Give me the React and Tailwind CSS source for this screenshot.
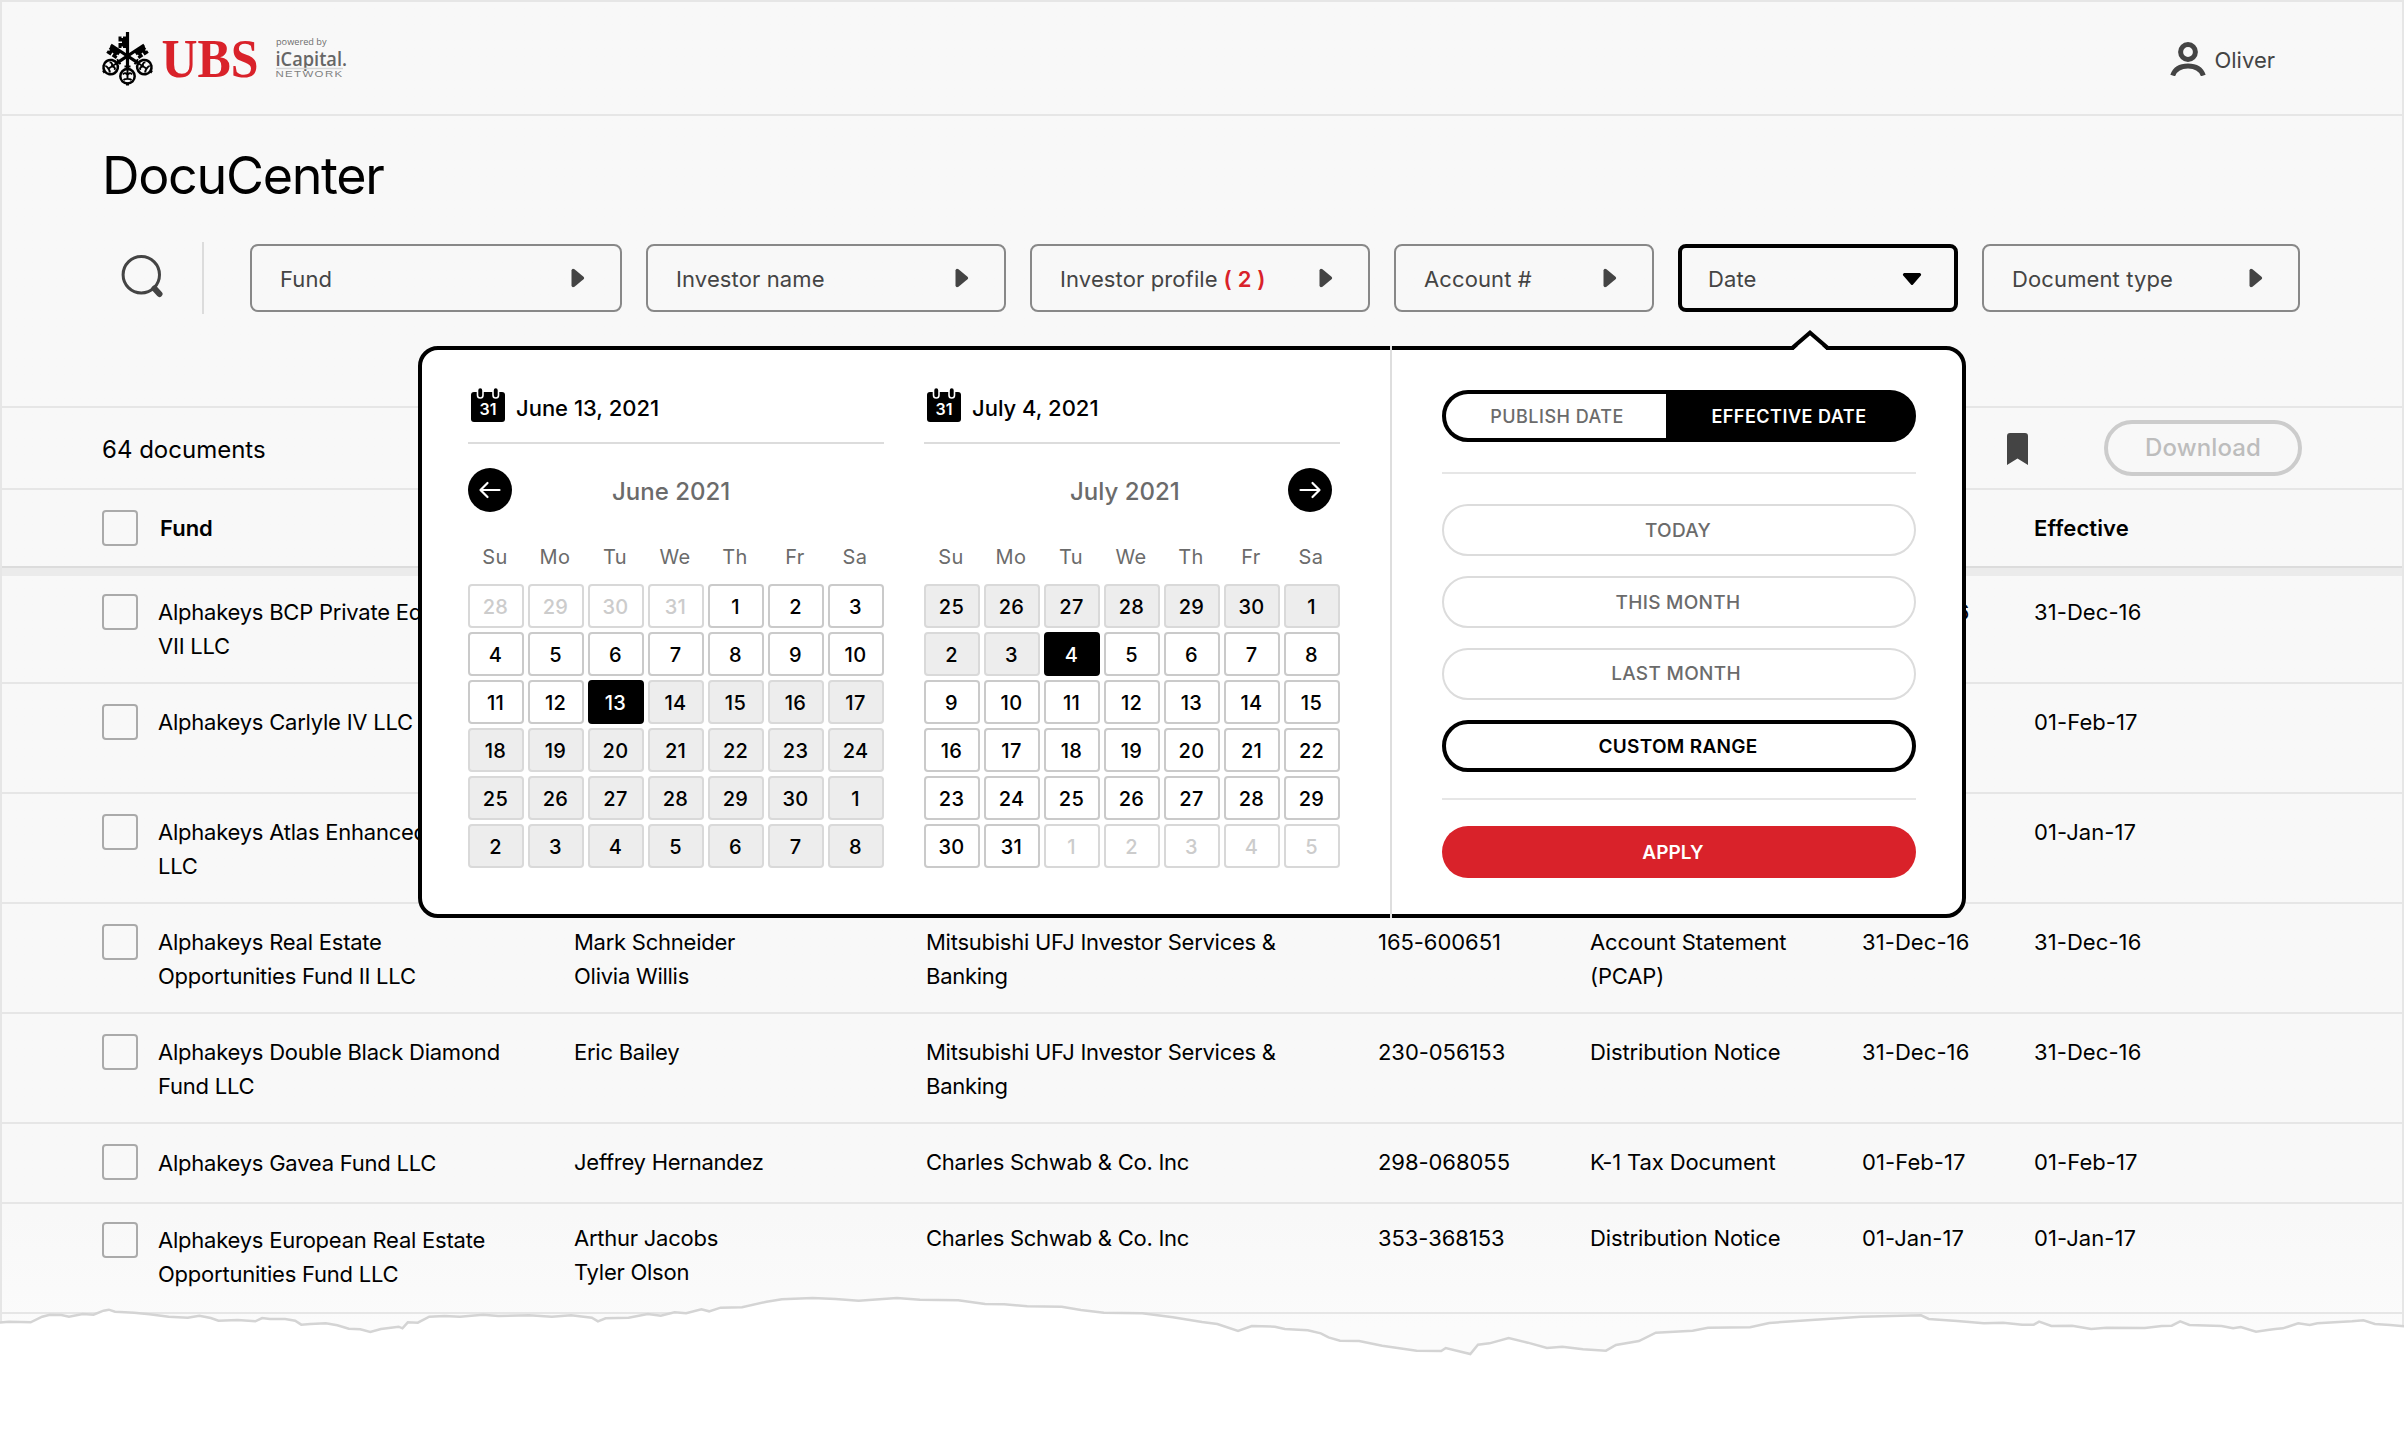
const filters = [
  { label: 'Fund', width: 'w-[372px]' },
  { label: 'Investor name', width: 'w-[360px]' },
  { label: 'Investor profile', count: 2, width: 'w-[340px]' },
  { label: 'Account #', width: 'w-[260px]' },
  { label: 'Date', width: 'w-[280px]', open: true },
  { label: 'Document type', width: 'w-[318px]' },
];

const documents = [
  {
    fund: ['Alphakeys BCP Private Equity', 'VII LLC'],
    published: '31-Dec-16',
    effective: '31-Dec-16',
    size: 'h-[108px] pt-[18px]',
  },
  { fund: ['Alphakeys Carlyle IV LLC'], effective: '01-Feb-17' },
  { fund: ['Alphakeys Atlas Enhanced', 'LLC'], effective: '01-Jan-17' },
  {
    fund: ['Alphakeys Real Estate', 'Opportunities Fund II LLC'],
    investor: ['Mark Schneider', 'Olivia Willis'],
    profile: ['Mitsubishi UFJ Investor Services &', 'Banking'],
    account: '165-600651',
    type: ['Account Statement', '(PCAP)'],
    published: '31-Dec-16',
    effective: '31-Dec-16',
  },
  {
    fund: ['Alphakeys Double Black Diamond', 'Fund LLC'],
    investor: ['Eric Bailey'],
    profile: ['Mitsubishi UFJ Investor Services &', 'Banking'],
    account: '230-056153',
    type: ['Distribution Notice'],
    published: '31-Dec-16',
    effective: '31-Dec-16',
  },
  {
    fund: ['Alphakeys Gavea Fund LLC'],
    investor: ['Jeffrey Hernandez'],
    profile: ['Charles Schwab & Co. Inc'],
    account: '298-068055',
    type: ['K-1 Tax Document'],
    published: '01-Feb-17',
    effective: '01-Feb-17',
    size: 'h-20 pt-5',
    fundShift: 'mt-0.5',
  },
  {
    fund: ['Alphakeys European Real Estate', 'Opportunities Fund LLC'],
    investor: ['Arthur Jacobs', 'Tyler Olson'],
    profile: ['Charles Schwab & Co. Inc'],
    account: '353-368153',
    type: ['Distribution Notice'],
    published: '01-Jan-17',
    effective: '01-Jan-17',
    size: 'h-[110px] pt-[18px]',
    shift: '-mt-0.5',
  },
];

const weekdays = ['Su', 'Mo', 'Tu', 'We', 'Th', 'Fr', 'Sa'];

const range = (from, to, state) =>
  Array.from({ length: to - from + 1 }, (_, i) => ({ day: from + i, state }));

const juneDays = [
  ...range(28, 31, 'muted'),
  ...range(1, 12, 'normal'),
  ...range(13, 13, 'selected'),
  ...range(14, 30, 'inRange'),
  ...range(1, 8, 'inRange'),
];

const julyDays = [
  ...range(25, 30, 'inRange'),
  ...range(1, 3, 'inRange'),
  ...range(4, 4, 'selected'),
  ...range(5, 31, 'normal'),
  ...range(1, 5, 'muted'),
];

const dayStyles = {
  normal: 'border-[#cacaca] bg-white text-black',
  muted: 'border-[#d8d8d8] bg-white text-[#cccccc]',
  inRange: 'border-[#d9d9d9] bg-[#ededed] text-black',
  selected: 'border-black bg-black text-white',
};

const rowGrid = 'grid grid-cols-[56px_416px_352px_452px_212px_272px_172px_1fr] pl-[100px]';

function Key({ transform, top = 4 }) {
  return (
    <g transform={transform}>
      <path d={`M25.5 ${top}V37`} stroke="#000" strokeWidth="3.200" />
      <path
        d="M25 4.500h-4v1.500h-1.500v-1.500h-3v5h3.500v1.500h-3.500v5h3v-1.500h1.500v1.500H25z"
        fill="#000"
      />
      <path d="M22.500 34.500h6" stroke="#000" strokeWidth="2" />
      <circle cx="25.500" cy="44.200" r="7.200" fill="#f8f8f8" stroke="#000" strokeWidth="2.500" />
      <path
        d="M25.5 37v5M21 42.500c1-2.200 4-1.500 4.500.8.500-2.300 3.500-3 4.500-.8M25.500 43v4M21.500 48c1.500-1.500 6.500-1.500 8 0"
        fill="none"
        stroke="#000"
        strokeWidth="1.900"
      />
      <path d="M25.500 50.500v3" stroke="#000" strokeWidth="3" />
    </g>
  );
}

function KeysLogo() {
  return (
    <svg viewBox="0 0 52 56" className="h-14 w-[52px] overflow-visible">
      <Key transform="rotate(-56.500 25.500 24)" />
      <Key transform="translate(51 0) scale(-1 1) rotate(-56.500 25.500 24)" />
      <Key top={0} />
    </svg>
  );
}

function Header() {
  return (
    <header className="flex h-[114px] items-center justify-between border-b-2 border-[#e6e6e6] pl-[100px] pr-[127px] pt-[3px]">
      <div className="flex items-center gap-2">
        <KeysLogo />
        <svg viewBox="0 0 190 56" className="h-14 w-[190px] overflow-visible">
          <text
            x="-.5"
            y="45"
            textLength="97"
            lengthAdjust="spacingAndGlyphs"
            className="fill-[#d9222a] font-['Liberation_Serif',serif] text-[55px] font-bold"
          >
            UBS
          </text>
          <text
            x="114"
            y="13"
            textLength="50.500"
            lengthAdjust="spacingAndGlyphs"
            className="fill-[#6d6d6d] font-['Open_Sans',sans-serif] text-[9.500px] font-medium"
          >
            powered by
          </text>
          <text
            x="113.500"
            y="34"
            textLength="71.500"
            lengthAdjust="spacingAndGlyphs"
            className="fill-[#666] font-['Open_Sans',sans-serif] text-[19px] font-semibold"
          >
            iCapital.
          </text>
          <path d="M114 36.500h67" stroke="#d5d5d5" strokeWidth="1.500" />
          <text
            x="113.500"
            y="45"
            textLength="68"
            lengthAdjust="spacingAndGlyphs"
            className="fill-[#808080] font-['Liberation_Sans',sans-serif] text-[8.500px] tracking-[1px]"
          >
            NETWORK
          </text>
        </svg>
      </div>
      <div className="flex items-center gap-2 text-[22px] text-[#444]">
        <svg viewBox="0 0 36 34" className="-mt-0.5 h-[34px] w-9" fill="none" stroke="#444" strokeWidth="5">
          <circle cx="18" cy="10" r="7.400" />
          <path d="M2.700 33.500C5 27 11 24 18 24s13 3 15.300 9.500" />
        </svg>
        <span className="pt-px">Oliver</span>
      </div>
    </header>
  );
}

function Filter({ label, count, width, open }) {
  return (
    <button
      className={`flex h-[68px] shrink-0 items-center justify-between rounded-lg text-[22px] text-[#444] ${width} ${
        open ? 'border-4 border-black pl-[26px] pr-8' : 'border-2 border-[#888] pl-7 pr-[35px]'
      }`}
    >
      <span className="whitespace-pre pt-0.5 tracking-[0.12px]">
        {label}
        {count && <span className="font-semibold tracking-[0.2px] text-[#d9222a]"> ( {count} )</span>}
      </span>
      {open ? (
        <svg viewBox="0 0 20 14" className="mt-px h-3.5 w-5">
          <path d="M2 1h16q2 1 .8 2.500L11 12.500q-1 1-2 0L1.200 3.500Q0 2 2 1z" fill="#000" />
        </svg>
      ) : (
        <svg viewBox="0 0 14 20" className="h-5 w-3.5">
          <path d="M.5 2.500Q1-.2 3.500 1.200l9 7.500q1.300 1.300 0 2.600l-9 7.500Q1 20.200.5 17.500z" fill="#444" />
        </svg>
      )}
    </button>
  );
}

function Checkbox() {
  return <span className="block size-9 rounded border-2 border-[#aaa]" />;
}

function Lines({ lines = [] }) {
  return lines.map((line) => (
    <span key={line} className="block whitespace-nowrap">
      {line}
    </span>
  ));
}

function DocumentRow({ doc }) {
  return (
    <div
      className={`${rowGrid} ${doc.size ?? 'h-[110px] pt-5'} border-b-2 border-[#e6e6e6] text-[22px] leading-[34px] text-black`}
    >
      <Checkbox />
      <div className={`tracking-[-0.23px] ${doc.fundShift ?? 'mt-px'}`}>
        <Lines lines={doc.fund} />
      </div>
      <div className={`col-span-6 grid grid-cols-subgrid pt-px ${doc.shift ?? ''}`}>
        <div className="tracking-[-0.25px]">
          <Lines lines={doc.investor} />
        </div>
        <div className="tracking-[-0.26px]">
          <Lines lines={doc.profile} />
        </div>
        <div className="tracking-[-0.06px]">{doc.account}</div>
        <div className="tracking-[-0.14px]">
          <Lines lines={doc.type} />
        </div>
        <div className="tracking-[0.08px]">{doc.published}</div>
        <div className="tracking-[0.08px]">{doc.effective}</div>
      </div>
    </div>
  );
}

function CalendarIcon() {
  return (
    <svg viewBox="0 0 34 34" className="h-[34px] w-[34px]">
      <rect x="0" y="4" width="34" height="30" rx="3" fill="#000" />
      <rect x="6.500" y="-.5" width="5.500" height="10.500" rx="2.750" fill="#000" stroke="#fff" strokeWidth="1.600" />
      <rect x="22" y="-.5" width="5.500" height="10.500" rx="2.750" fill="#000" stroke="#fff" strokeWidth="1.600" />
      <text
        x="17"
        y="26.500"
        textAnchor="middle"
        className="fill-white font-['Inter',sans-serif] text-[16px] font-semibold"
      >
        31
      </text>
    </svg>
  );
}

function NavButton({ direction }) {
  return (
    <button className="flex size-11 items-center justify-center rounded-full bg-black">
      <svg
        viewBox="0 0 24 20"
        className="h-5 w-6"
        fill="none"
        stroke="#fff"
        strokeWidth="2.200"
        strokeLinecap="round"
        strokeLinejoin="round"
      >
        {direction === 'prev' ? (
          <path d="M21.500 10H3M9.500 3L2.500 10l7 7" />
        ) : (
          <path d="M2.500 10H21M14.500 3l7 7-7 7" />
        )}
      </svg>
    </button>
  );
}

function Calendar({ date, month, days, nav }) {
  return (
    <div className="w-[416px]">
      <div className="flex h-[66px] items-start gap-[11px] border-b-2 border-[#dcdcdc] pl-[3px] pt-[10px]">
        <CalendarIcon />
        <span className="mt-1 text-[22px] font-medium leading-8">{date}</span>
      </div>
      <div
        className={`mt-6 flex h-11 items-center ${nav === 'prev' ? 'gap-[100px]' : 'justify-between pl-[146px] pr-2'}`}
      >
        {nav === 'prev' && <NavButton direction="prev" />}
        <span className="mt-[3px] text-2xl font-medium text-[#6b6b6b]">{month}</span>
        {nav === 'next' && <NavButton direction="next" />}
      </div>
      <div className="-ml-1 mr-1 mt-[30px] grid grid-cols-7 gap-1 text-center text-xl leading-[30px] tracking-[0.4px] text-[#6b6b6b]">
        {weekdays.map((day) => (
          <span key={day} className="translate-x-[3px]">
            {day}
          </span>
        ))}
      </div>
      <div className="mt-3 grid grid-cols-7 gap-1">
        {days.map(({ day, state }, i) => (
          <span
            key={i}
            className={`flex h-11 items-center justify-center rounded border-2 pr-px pt-px text-xl font-medium tracking-[0.3px] ${dayStyles[state]}`}
          >
            {day}
          </span>
        ))}
      </div>
    </div>
  );
}

function Preset({ children, active, className = 'pr-0.5 pt-0.5' }) {
  return (
    <button
      className={`flex h-[52px] items-center justify-center rounded-full bg-white text-[19px] ${className} ${
        active
          ? 'border-4 border-black font-semibold tracking-[0.3px] text-black'
          : 'border-2 border-[#dcdcdc] font-medium tracking-[0.3px] text-[#6b6b6b]'
      }`}
    >
      {children}
    </button>
  );
}

function DatePopover() {
  return (
    <div className="absolute left-[416px] top-[344px] flex h-[572px] w-[1548px] rounded-[20px] border-4 border-black bg-white">
      <svg viewBox="0 0 40 22" className="absolute left-[1368px] -top-[22px] h-[22px] w-10">
        <path d="M3.500 22L20 6.500 36.500 22z" fill="#fff" />
        <path d="M.5 21.500L20 4.700 39.500 21.500" fill="none" stroke="#000" strokeWidth="4" />
      </svg>
      <div className="flex gap-10 pl-[46px] pt-7">
        <Calendar date="June 13, 2021" month="June 2021" days={juneDays} nav="prev" />
        <Calendar date="July 4, 2021" month="July 2021" days={julyDays} nav="next" />
      </div>
      <div className="-my-1 ml-[50px] w-0.5 bg-[#dedede]" />
      <div className="ml-[50px] flex w-[474px] flex-col pt-10">
        <div className="grid h-[52px] grid-cols-[220px_1fr] rounded-full border-4 border-black bg-black text-[18px] tracking-[0.5px]">
          <button className="rounded-l-full bg-white pl-0.5 font-medium text-[#6b6b6b]">PUBLISH DATE</button>
          <button className="font-semibold text-white">EFFECTIVE DATE</button>
        </div>
        <div className="mt-[30px] h-0.5 bg-[#e6e6e6]" />
        <div className="mt-[30px] flex flex-col gap-5">
          <Preset>TODAY</Preset>
          <Preset>THIS MONTH</Preset>
          <Preset className="pr-1.5">LAST MONTH</Preset>
          <Preset active>CUSTOM RANGE</Preset>
        </div>
        <div className="mt-[26px] h-0.5 bg-[#e6e6e6]" />
        <button className="mt-[26px] h-[52px] rounded-full bg-[#d9222a] pr-3 pt-[3px] text-[19px] font-semibold text-white">
          APPLY
        </button>
      </div>
    </div>
  );
}

function TornEdge() {
  return (
    <svg
      viewBox="0 360 3136 516"
      preserveAspectRatio="none"
      className="absolute bottom-0 left-0 h-[172px] w-[2404px]"
    >
      <path
        d="M-20 492L12 485 40 487 55 470 65 464 80 465 90 470 108 462 122 464 135 452 142 449 150 455 175 458 195 463 220 470 245 473 260 467 275 474 285 482 310 480 333 484 342 474 352 477 372 477 385 482 393 494 405 492 425 490 440 496 455 506 470 508 483 516 497 507 520 500 525 505 532 487 545 488 560 470 580 468 600 470 630 464 650 468 690 466 720 470 745 466 772 473 780 484 790 475 820 473 845 462 862 467 880 457 895 460 915 448 925 454 940 443 968 442 1000 425 1020 418 1060 414 1090 417 1120 422 1170 414 1200 419 1250 421 1285 432 1310 433 1340 439 1385 440 1410 450 1440 458 1490 460 1530 472 1568 486 1588 492 1615 513 1633 498 1663 500 1676 507 1706 511 1723 520 1733 532 1748 542 1773 543 1803 557 1848 572 1880 573 1886 564 1918 582 1928 554 1943 550 1968 534 1993 548 2018 564 2038 560 2065 568 2095 572 2108 555 2138 543 2160 518 2208 512 2228 503 2283 502 2308 489 2368 479 2428 470 2506 466 2516 477 2553 483 2588 490 2613 488 2638 494 2653 494 2660 485 2676 498 2703 497 2728 507 2748 503 2798 504 2820 498 2833 497 2844 484 2856 495 2898 498 2913 505 2923 501 2943 515 2958 510 2968 507 2978 505 2998 490 3013 495 3023 490 3068 484 3083 481 3098 492 3118 495 3160 503V900H-20Z"
        fill="#fff"
        stroke="#d4d4d4"
        strokeWidth="2.500"
        vectorEffect="non-scaling-stroke"
      />
    </svg>
  );
}

export default function App() {
  return (
    <div className="relative h-[1452px] w-[2404px] overflow-hidden bg-white font-['Inter',sans-serif] text-black">
      <div className="relative h-[1380px] border-x-2 border-t-2 border-[#e6e6e6] bg-linear-to-b from-[#f8f8f8] from-88% to-[#fbfbfb] to-96%">
        <Header />
        <h1 className="ml-[100px] mt-[26px] text-[52px] leading-[68px] tracking-[-1.3px]">DocuCenter</h1>

        <div className="mt-8 flex h-[72px] items-center">
          <svg viewBox="0 0 42 44" className="-mt-0.5 ml-[119px] h-11 w-[42px]" fill="none" stroke="#444">
            <circle cx="20.300" cy="19.800" r="18.200" strokeWidth="3" />
            <path d="M33.500 33.500l5 5.500" strokeWidth="6" strokeLinecap="round" />
          </svg>
          <div className="ml-[39px] h-full w-0.5 bg-[#dcdcdc]" />
          <div className="ml-[46px] flex gap-6">
            {filters.map((filter) => (
              <Filter key={filter.label} {...filter} />
            ))}
          </div>
        </div>

        <div className="mt-[92px] flex h-[84px] items-center border-y-2 border-[#e6e6e6] pl-[100px] pr-[100px]">
          <span className="pt-[3px] text-2xl">64 documents</span>
          <svg viewBox="0 0 21 32" className="ml-auto mr-[76px] mt-px h-8 w-[21px]">
            <path d="M0 32V3q0-3 3-3h15q3 0 3 3v29L10.500 25.500z" fill="#444" />
          </svg>
          <button className="h-14 w-[198px] rounded-full border-4 border-[#ccc] text-2xl font-medium tracking-[0.1px] text-[#bdbdbd]">
            Download
          </button>
        </div>

        <div className={`${rowGrid} h-[78px] items-center border-b-2 border-[#dcdcdc] text-[22px] font-semibold`}>
          <Checkbox />
          <span className="ml-0.5">Fund</span>
          <span className="col-start-8 tracking-[0.1px]">Effective</span>
        </div>
        <div className="h-2 bg-[#ebebeb]" />

        {documents.map((doc) => (
          <DocumentRow key={doc.fund[0]} doc={doc} />
        ))}

        <DatePopover />
      </div>
      <TornEdge />
    </div>
  );
}
